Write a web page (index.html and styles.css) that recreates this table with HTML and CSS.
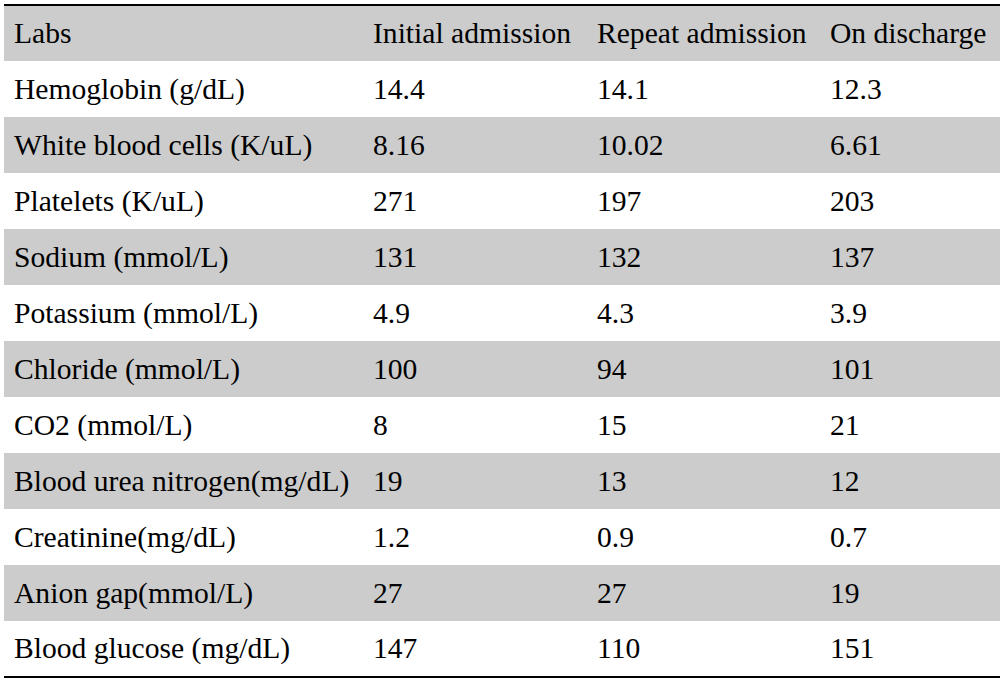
FILE: index.html
```html
<!DOCTYPE html>
<html>
<head>
<meta charset="utf-8">
<link rel="stylesheet" href="styles.css">
</head>
<body>
<table class="labs">
  <colgroup>
    <col class="c1"><col class="c2"><col class="c3"><col class="c4">
  </colgroup>
  <thead>
    <tr class="shade"><th>Labs</th><th>Initial admission</th><th>Repeat admission</th><th>On discharge</th></tr>
  </thead>
  <tbody>
    <tr><td>Hemoglobin (g/dL)</td><td>14.4</td><td>14.1</td><td>12.3</td></tr>
    <tr class="shade"><td>White blood cells (K/uL)</td><td>8.16</td><td>10.02</td><td>6.61</td></tr>
    <tr><td>Platelets (K/uL)</td><td>271</td><td>197</td><td>203</td></tr>
    <tr class="shade"><td>Sodium (mmol/L)</td><td>131</td><td>132</td><td>137</td></tr>
    <tr><td>Potassium (mmol/L)</td><td>4.9</td><td>4.3</td><td>3.9</td></tr>
    <tr class="shade"><td>Chloride (mmol/L)</td><td>100</td><td>94</td><td>101</td></tr>
    <tr><td>CO2 (mmol/L)</td><td>8</td><td>15</td><td>21</td></tr>
    <tr class="shade"><td>Blood urea nitrogen(mg/dL)</td><td>19</td><td>13</td><td>12</td></tr>
    <tr><td>Creatinine(mg/dL)</td><td>1.2</td><td>0.9</td><td>0.7</td></tr>
    <tr class="shade"><td>Anion gap(mmol/L)</td><td>27</td><td>27</td><td>19</td></tr>
    <tr><td>Blood glucose (mg/dL)</td><td>147</td><td>110</td><td>151</td></tr>
  </tbody>
</table>
</body>
</html>
```
FILE: styles.css
```css
html, body {
  margin: 0;
  padding: 0;
  background: #ffffff;
}
body {
  padding: 4px 8px 0 4px;
}
.labs {
  width: 996px;
  border-collapse: collapse;
  table-layout: fixed;
  border-top: 2px solid #000;
  border-bottom: 2px solid #000;
  font-family: "Liberation Serif", "Times New Roman", serif;
  font-size: 29.6px;
  color: #000;
}
.c1 { width: 359px; }
.c2 { width: 224px; }
.c3 { width: 233px; }
.c4 { width: 180px; }
.labs th,
.labs td {
  height: 56px;
  padding: 0 0 0 10px;
  text-align: left;
  font-weight: normal;
  vertical-align: middle;
  white-space: nowrap;
  box-sizing: border-box;
}
.labs tr {
  height: 56px;
}
.shade {
  background: #cccccc;
}
```
